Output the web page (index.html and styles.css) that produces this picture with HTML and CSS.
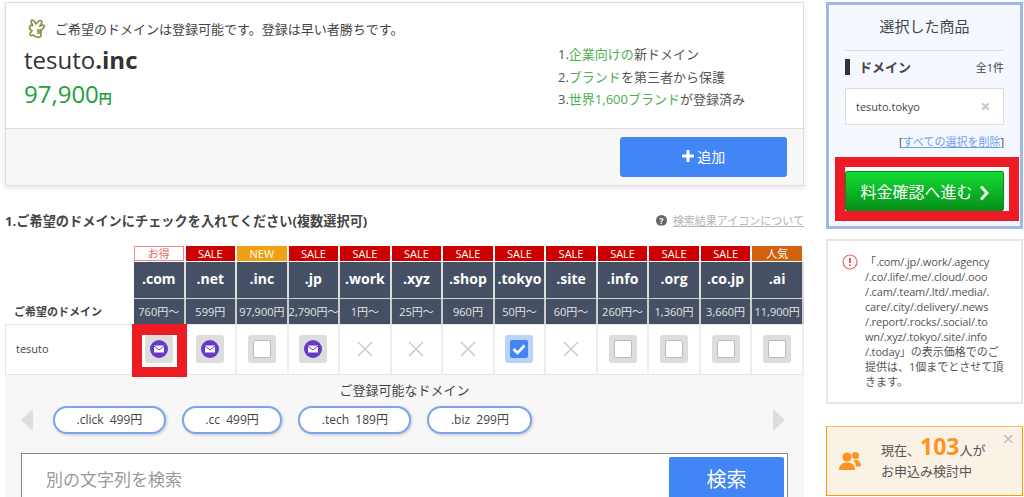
FILE: index.html
```html
<!DOCTYPE html>
<html lang="ja">
  <head>
    <meta charset="UTF-8" />
    <title>ドメイン検索結果</title>
    <link rel="stylesheet" href="styles.css">
  </head>
  <body>
    <div class="page">
      <main class="main">
        <section class="hero">
          <div class="hero-top">
            <div class="hero-left">
              <p class="hero-note">
                <svg class="hand" viewBox="0 0 18 20" width="18" height="20"><path d="M4 2c2 0 3 2 4 4l3-3c1-1 3 0 3 1l-2 4 3-1c1 0 2 1 1 2l-3 4v4c0 2-2 3-4 2-2 0-3-1-4-2-1 1-3 1-3-1 0-1 1-2 2-3-2-1-3-3-2-5 0-1 2-1 3 0C4 6 2 3 4 2z"/><path d="M10 11v5M12 11v5"/></svg>
                ご希望のドメインは登録可能です。登録は早い者勝ちです。
              </p>
              <p class="hero-name">tesuto<b>.inc</b></p>
              <p class="hero-price">97,900<span>円</span></p>
            </div>
            <ol class="hero-points">
              <li>1.<em>企業向けの</em>新ドメイン</li>
              <li>2.<em>ブランド</em>を第三者から保護</li>
              <li>3.<em>世界1,600ブランド</em>が登録済み</li>
            </ol>
          </div>
          <div class="hero-foot">
            <button class="btn-add">
              <svg viewBox="0 0 12 12" width="12" height="12"><path d="M4.500 0h3v4.500H12v3H7.500V12h-3V7.500H0v-3h4.500z" fill="#fff"/></svg>
              追加
            </button>
          </div>
        </section>

        <div class="section-head">
          <h2>1.ご希望のドメインにチェックを入れてください(複数選択可)</h2>
          <a class="help-link" href="#"><i>?</i><span>検索結果アイコンについて</span></a>
        </div>

        <table class="domains">
          <tr class="row-badge">
            <th></th>
            <td class="deal">お得</td>
            <td>SALE</td>
            <td class="new">NEW</td>
            <td>SALE</td>
            <td>SALE</td>
            <td>SALE</td>
            <td>SALE</td>
            <td>SALE</td>
            <td>SALE</td>
            <td>SALE</td>
            <td>SALE</td>
            <td>SALE</td>
            <td class="hot">人気</td>
          </tr>
          <tr class="row-name">
            <th></th>
            <td>.com</td>
            <td>.net</td>
            <td>.inc</td>
            <td>.jp</td>
            <td>.work</td>
            <td>.xyz</td>
            <td>.shop</td>
            <td>.tokyo</td>
            <td>.site</td>
            <td>.info</td>
            <td>.org</td>
            <td>.co.jp</td>
            <td>.ai</td>
          </tr>
          <tr class="row-price">
            <th>ご希望のドメイン</th>
            <td>760円〜</td>
            <td>599円</td>
            <td>97,900円</td>
            <td>2,790円〜</td>
            <td>1円〜</td>
            <td>25円〜</td>
            <td>960円</td>
            <td>50円〜</td>
            <td>60円〜</td>
            <td>260円〜</td>
            <td>1,360円</td>
            <td>3,660円</td>
            <td>11,900円</td>
          </tr>
          <tr class="row-check">
            <th>tesuto</th>
            <td class="marked">
              <span class="mark-box"></span>
              <span class="tile"><svg class="mail" viewBox="0 0 18 18" width="18" height="18"><circle cx="9" cy="9" r="9" fill="#6639c6"/><path d="M4 5.500h10v7H4z" fill="#fff"/><path d="M4 6l5 4 5-4" fill="none" stroke="#6639c6"/></svg></span>
            </td>
            <td><span class="tile"><svg class="mail" viewBox="0 0 18 18" width="18" height="18"><circle cx="9" cy="9" r="9" fill="#6639c6"/><path d="M4 5.500h10v7H4z" fill="#fff"/><path d="M4 6l5 4 5-4" fill="none" stroke="#6639c6"/></svg></span></td>
            <td><span class="tile"><span class="box"></span></span></td>
            <td><span class="tile"><svg class="mail" viewBox="0 0 18 18" width="18" height="18"><circle cx="9" cy="9" r="9" fill="#6639c6"/><path d="M4 5.500h10v7H4z" fill="#fff"/><path d="M4 6l5 4 5-4" fill="none" stroke="#6639c6"/></svg></span></td>
            <td><svg class="cross" viewBox="0 0 16 16" width="16" height="16"><path d="M1 1l14 14M15 1L1 15"/></svg></td>
            <td><svg class="cross" viewBox="0 0 16 16" width="16" height="16"><path d="M1 1l14 14M15 1L1 15"/></svg></td>
            <td><svg class="cross" viewBox="0 0 16 16" width="16" height="16"><path d="M1 1l14 14M15 1L1 15"/></svg></td>
            <td><span class="tile on"><svg viewBox="0 0 18 18" width="18" height="18"><rect width="18" height="18" rx="2" fill="#4285f4"/><path d="M3.500 9l4 4 7-7.500" fill="none" stroke="#fff" stroke-width="2.600"/></svg></span></td>
            <td><svg class="cross" viewBox="0 0 16 16" width="16" height="16"><path d="M1 1l14 14M15 1L1 15"/></svg></td>
            <td><span class="tile"><span class="box"></span></span></td>
            <td><span class="tile"><span class="box"></span></span></td>
            <td><span class="tile"><span class="box"></span></span></td>
            <td><span class="tile"><span class="box"></span></span></td>
          </tr>
        </table>

        <section class="more">
          <p class="more-title">ご登録可能なドメイン</p>
          <div class="carousel">
            <span class="arrow arrow-left"></span>
            <div class="pills">
              <a class="pill" href="#">.click&nbsp; 499円</a>
              <a class="pill" href="#">.cc&nbsp; 499円</a>
              <a class="pill" href="#">.tech&nbsp; 189円</a>
              <a class="pill" href="#">.biz&nbsp; 299円</a>
            </div>
            <span class="arrow arrow-right"></span>
          </div>
          <form class="search">
            <input type="text" placeholder="別の文字列を検索" />
            <button type="button">検索</button>
          </form>
        </section>
      </main>

      <aside class="side">
        <section class="cart">
          <h3>選択した商品</h3>
          <div class="cart-head">
            <strong>ドメイン</strong>
            <span>全1件</span>
          </div>
          <div class="cart-item">
            tesuto.tokyo
            <svg viewBox="0 0 10 10" width="9" height="9"><path d="M1.500 1.500l7 7M8.500 1.500l-7 7" stroke="#ccc" stroke-width="2.600"/></svg>
          </div>
          <p class="cart-clear">[<a href="#">すべての選択を削除</a>]</p>
          <div class="cart-go">
            <span class="mark-box"></span>
            <button>料金確認へ進む
              <svg viewBox="0 0 10 16" width="10" height="16"><path d="M2 1.500L8 8l-6 6.500" fill="none" stroke="#fff" stroke-width="2.800"/></svg>
            </button>
          </div>
        </section>

        <section class="notice">
          <svg viewBox="0 0 16 16" width="16" height="16"><circle cx="8" cy="8" r="7" fill="none" stroke="#dd6b6b" stroke-width="1.200"/><path d="M8 4v5" stroke="#d33" stroke-width="1.600"/><path d="M8 10.500v1.600" stroke="#d33" stroke-width="1.600"/></svg>
          <p>「<span>.com/.jp/.work/.agency</span><br><span>/.co/.life/.me/.cloud/.ooo</span><br><span>/.cam/.team/.ltd/.media/.</span><br><span>care/.city/.delivery/.news</span><br><span>/.report/.rocks/.social/.to</span><br><span>wn/.xyz/.tokyo/.site/.info</span><br><span>/.today</span>」の表示価格でのご<br>提供は、1個までとさせて頂<br>きます。</p>
        </section>

        <section class="viewers">
          <svg viewBox="0 0 22 20" width="22" height="20"><circle cx="8" cy="6" r="4.600" fill="#ff9320"/><circle cx="16.500" cy="4.600" r="3.600" fill="#ff9320"/><path d="M0 19c0-5 3-7.500 8-7.500s8 2.500 8 7.500z" fill="#ff9320"/><path d="M17 15.500h5c0-4-2-6.500-5.500-6.500-1 0-1.800.2-2.500.5 1.800 1.300 3 3.300 3 6z" fill="#ff9320"/></svg>
          <p>現在、<b>103</b>人が<br>お申込み検討中</p>
          <span class="close">×</span>
        </section>
      </aside>
    </div>
  </body>
</html>
```

FILE: styles.css
```css
html,
body {
  height: 497px;
  margin: 0;
  overflow: hidden;
}

body {
  font-family: "Open Sans", "Noto Sans CJK JP", sans-serif;
  color: #444;
  background: #fff;
}

p,
h2,
h3,
ol {
  margin: 0;
  padding: 0;
}

.page {
  display: flex;
  gap: 22px;
  padding: 2px 0 0 5px;
}

.main {
  width: 799px;
  flex: none;
}

/* top result */
.hero {
  border: 1px solid #ddd;
  box-shadow: 0 2px 6px rgba(0, 0, 0, 0.1);
}

.hero-top {
  height: 125px;
  display: flex;
  justify-content: space-between;
  border-bottom: 1px solid #ddd;
}

.hero-left {
  padding: 15px 0 0 18px;
}

.hero-note {
  display: flex;
  align-items: center;
  gap: 9px;
  height: 20px;
  padding-left: 4px;
  font-size: 13px;
}

.hand {
  fill: #fff;
  stroke: #8f8a3e;
  stroke-width: 1.6;
}

.hero-name {
  margin-top: 5px;
  font-size: 24px;
  line-height: 34px;
  color: #333;
}

.hero-price {
  margin-top: 1px;
  font-size: 24px;
  line-height: 32px;
  color: #22a03c;
}

.hero-price span {
  font-size: 13px;
  font-weight: bold;
}

.hero-points {
  list-style: none;
  width: 245px;
  padding-top: 40px;
  font-size: 13px;
  line-height: 22.5px;
  color: #555;
}

.hero-points em {
  font-style: normal;
  color: #4caf50;
}

.hero-foot {
  height: 56px;
  background: #f7f7f7;
  display: flex;
  justify-content: flex-end;
  align-items: center;
  padding-right: 16px;
}

.btn-add {
  width: 167px;
  height: 40px;
  border: none;
  border-radius: 3px;
  background: #4285f4;
  color: #fff;
  font-family: inherit;
  font-size: 14px;
  padding: 0 0 2px;
}

/* section title */
.section-head {
  display: flex;
  justify-content: space-between;
  align-items: center;
  height: 20px;
  margin-top: 24px;
  margin-bottom: 16px;
}

.section-head h2 {
  font-size: 13.2px;
}

.help-link {
  display: flex;
  align-items: center;
  gap: 6px;
  font-size: 11px;
  color: #b5b5b5;
}

.help-link i {
  width: 11px;
  height: 11px;
  border-radius: 50%;
  background: #666;
  color: #fff;
  font-size: 9px;
  font-style: normal;
  font-weight: bold;
  line-height: 11px;
  text-align: center;
}

/* domain table */
.domains {
  width: 799px;
  table-layout: fixed;
  border-collapse: separate;
  border-spacing: 0;
}

.domains th:first-child {
  width: 129px;
  padding: 0;
}

.domains td {
  padding: 0;
  text-align: center;
  white-space: nowrap;
}

.domains .row-badge td {
  height: 15px;
  background: #c00;
  color: #fff;
  font-size: 11px;
  line-height: 15px;
  border-right: 2px solid #fff;
  border-bottom: 1px solid #fff;
}

.domains .row-badge td.deal {
  background: #fff;
  color: #e06666;
  box-shadow: inset 0 0 0 1px #e88;
}

.domains .row-badge td.new {
  background: #f0a010;
}

.domains .row-badge td.hot {
  background: #d2620f;
}

.domains .row-name td {
  height: 33px;
  padding-bottom: 3px;
  background: #465064;
  color: #fff;
  font-size: 14px;
  font-weight: bold;
  border-right: 2px solid #ddd;
  border-bottom: 1px solid #ccc;
}

.domains .row-price td {
  height: 23px;
  padding-bottom: 2px;
  background: #465064;
  color: #e4e4e4;
  font-size: 11px;
  border-right: 2px solid #ccc;
}

.domains .row-price th {
  padding: 0 0 5px 9px;
  font-size: 11px;
  text-align: left;
  color: #444;
  vertical-align: bottom;
}

.domains .row-check th {
  border: 1px solid #e5e5e5;
  padding: 0 0 2px 10px;
  font-size: 11px;
  font-weight: normal;
  text-align: left;
}

.domains .row-check td {
  height: 48px;
  padding-bottom: 1px;
  line-height: 0;
  border-top: 1px solid #e5e5e5;
  border-bottom: 1px solid #e5e5e5;
  border-right: 2px solid #eee;
}

.tile {
  width: 28px;
  height: 28px;
  border-radius: 3px;
  background: #ddd;
  display: inline-flex;
  align-items: center;
  justify-content: center;
  vertical-align: middle;
}

.tile.on {
  background: #b9d3fb;
}

.box {
  width: 16px;
  height: 16px;
  border: 1px solid #bbb;
  border-radius: 2px;
  background: #fff;
}

.cross {
  fill: none;
  stroke: #ccc;
  stroke-width: 1.6;
  vertical-align: middle;
}

.marked {
  position: relative;
}

.mark-box {
  position: absolute;
  border: solid #ed1c24;
  background: #fff;
}

.marked .mark-box {
  left: -2px;
  top: -1px;
  width: 35px;
  height: 32px;
  border-width: 11px 10px 10px;
}

.marked .tile {
  position: relative;
}

/* other tlds */
.more {
  background: #f7f7f7;
  height: 122px;
  padding: 7px 16px 0;
}

.more-title {
  font-size: 13px;
  line-height: 16px;
  text-align: center;
}

.carousel {
  display: flex;
  justify-content: space-between;
  align-items: center;
  height: 28px;
  margin-top: 8px;
}

.arrow {
  width: 0;
  height: 0;
  border-style: solid;
  border-width: 11px 0;
  border-color: transparent;
}

.arrow-left {
  border-right: 12px solid #ddd;
}

.arrow-right {
  border-left: 12px solid #ddd;
  margin-right: 3px;
}

.pills {
  flex: 1;
  display: flex;
  gap: 16px;
  padding-left: 20px;
}

.pill {
  height: 24px;
  padding: 0 21.5px;
  border: 2px solid #7aa5ee;
  border-radius: 14px;
  background: #fff;
  box-shadow: 1px 1px 3px rgba(0, 0, 0, 0.2);
  color: #444;
  font-size: 12px;
  line-height: 23px;
  text-decoration: none;
}

.search {
  display: flex;
  justify-content: space-between;
  width: 767px;
  height: 60px;
  margin-top: 19px;
  padding: 3px;
  box-sizing: border-box;
  border: 1px solid #888;
  background: #fff;
}

.search input {
  flex: 1;
  border: none;
  outline: none;
  padding: 0 0 8px 21px;
  font-family: inherit;
  font-size: 17px;
}

.search input::placeholder {
  color: #999;
}

.search button {
  width: 115px;
  border: none;
  border-radius: 2px 2px 0 0;
  background: #4285f4;
  color: #fff;
  font-family: inherit;
  font-size: 20px;
  padding-bottom: 10px;
}

/* sidebar */
.side {
  width: 197px;
  flex: none;
  display: flex;
  flex-direction: column;
}

.cart {
  height: 227px;
  box-sizing: border-box;
  border: 3px solid #a0b8e8;
  background: #f5f8ff;
  padding: 0 16px;
}

.cart h3 {
  height: 45px;
  border-bottom: 1px solid #ddd;
  font-size: 15px;
  font-weight: normal;
  line-height: 42px;
  text-align: center;
}

.cart-head {
  display: flex;
  justify-content: space-between;
  align-items: center;
  height: 16px;
  margin-top: 8px;
  border-left: 5px solid #333;
  padding-left: 9px;
  font-size: 12px;
}

.cart-head span {
  font-size: 11px;
}

.cart-head strong {
  font-size: 13px;
  position: relative;
  top: -1px;
}

.cart-item {
  display: flex;
  justify-content: space-between;
  align-items: center;
  height: 37px;
  box-sizing: border-box;
  margin-top: 13px;
  padding: 0 13px 0 10px;
  border: 1px solid #ddd;
  background: #fff;
  font-size: 11px;
}

.cart-clear {
  margin-top: 9px;
  font-size: 11px;
  line-height: 16px;
  text-align: right;
}

.cart-clear a {
  color: #6d9eeb;
}

.cart-go {
  position: relative;
  margin-top: 21px;
}

.cart-go .mark-box {
  left: -10px;
  top: -14px;
  width: 164px;
  height: 44px;
  border-width: 10px;
}

.cart-go button {
  position: relative;
  display: block;
  width: 159px;
  height: 40px;
  border: 1px solid #0a8a1e;
  border-radius: 2px;
  background: linear-gradient(#14dc34, #059018);
  color: #fff;
  font-family: inherit;
  font-size: 16px;
  padding: 0;
}

.cart-go svg {
  vertical-align: -3px;
  margin-left: 2px;
}

.notice {
  display: flex;
  gap: 7px;
  height: 165px;
  box-sizing: border-box;
  margin-top: 10px;
  padding: 13px 10px 0 14px;
  border: 2px solid #e5e5e5;
}

.notice svg {
  flex: none;
}

.notice p {
  font-size: 11px;
  line-height: 15px;
  color: #555;
  white-space: nowrap;
}

.notice span {
  letter-spacing: -0.15px;
}

.viewers {
  position: relative;
  display: flex;
  align-items: center;
  gap: 20px;
  height: 70px;
  box-sizing: border-box;
  margin-top: 22px;
  padding-left: 12px;
  border: 1px solid #f90;
  border-top-color: #fdb76a;
  background: #fbf2e6;
}

.viewers p {
  font-size: 13px;
  line-height: 21px;
  color: #555;
  padding-bottom: 4px;
}

.viewers b {
  font-size: 23px;
  line-height: 20px;
  color: #ff9320;
}

.close {
  position: absolute;
  top: 2px;
  right: 8px;
  font-size: 20px;
  line-height: 20px;
  color: #bbb;
}
```
